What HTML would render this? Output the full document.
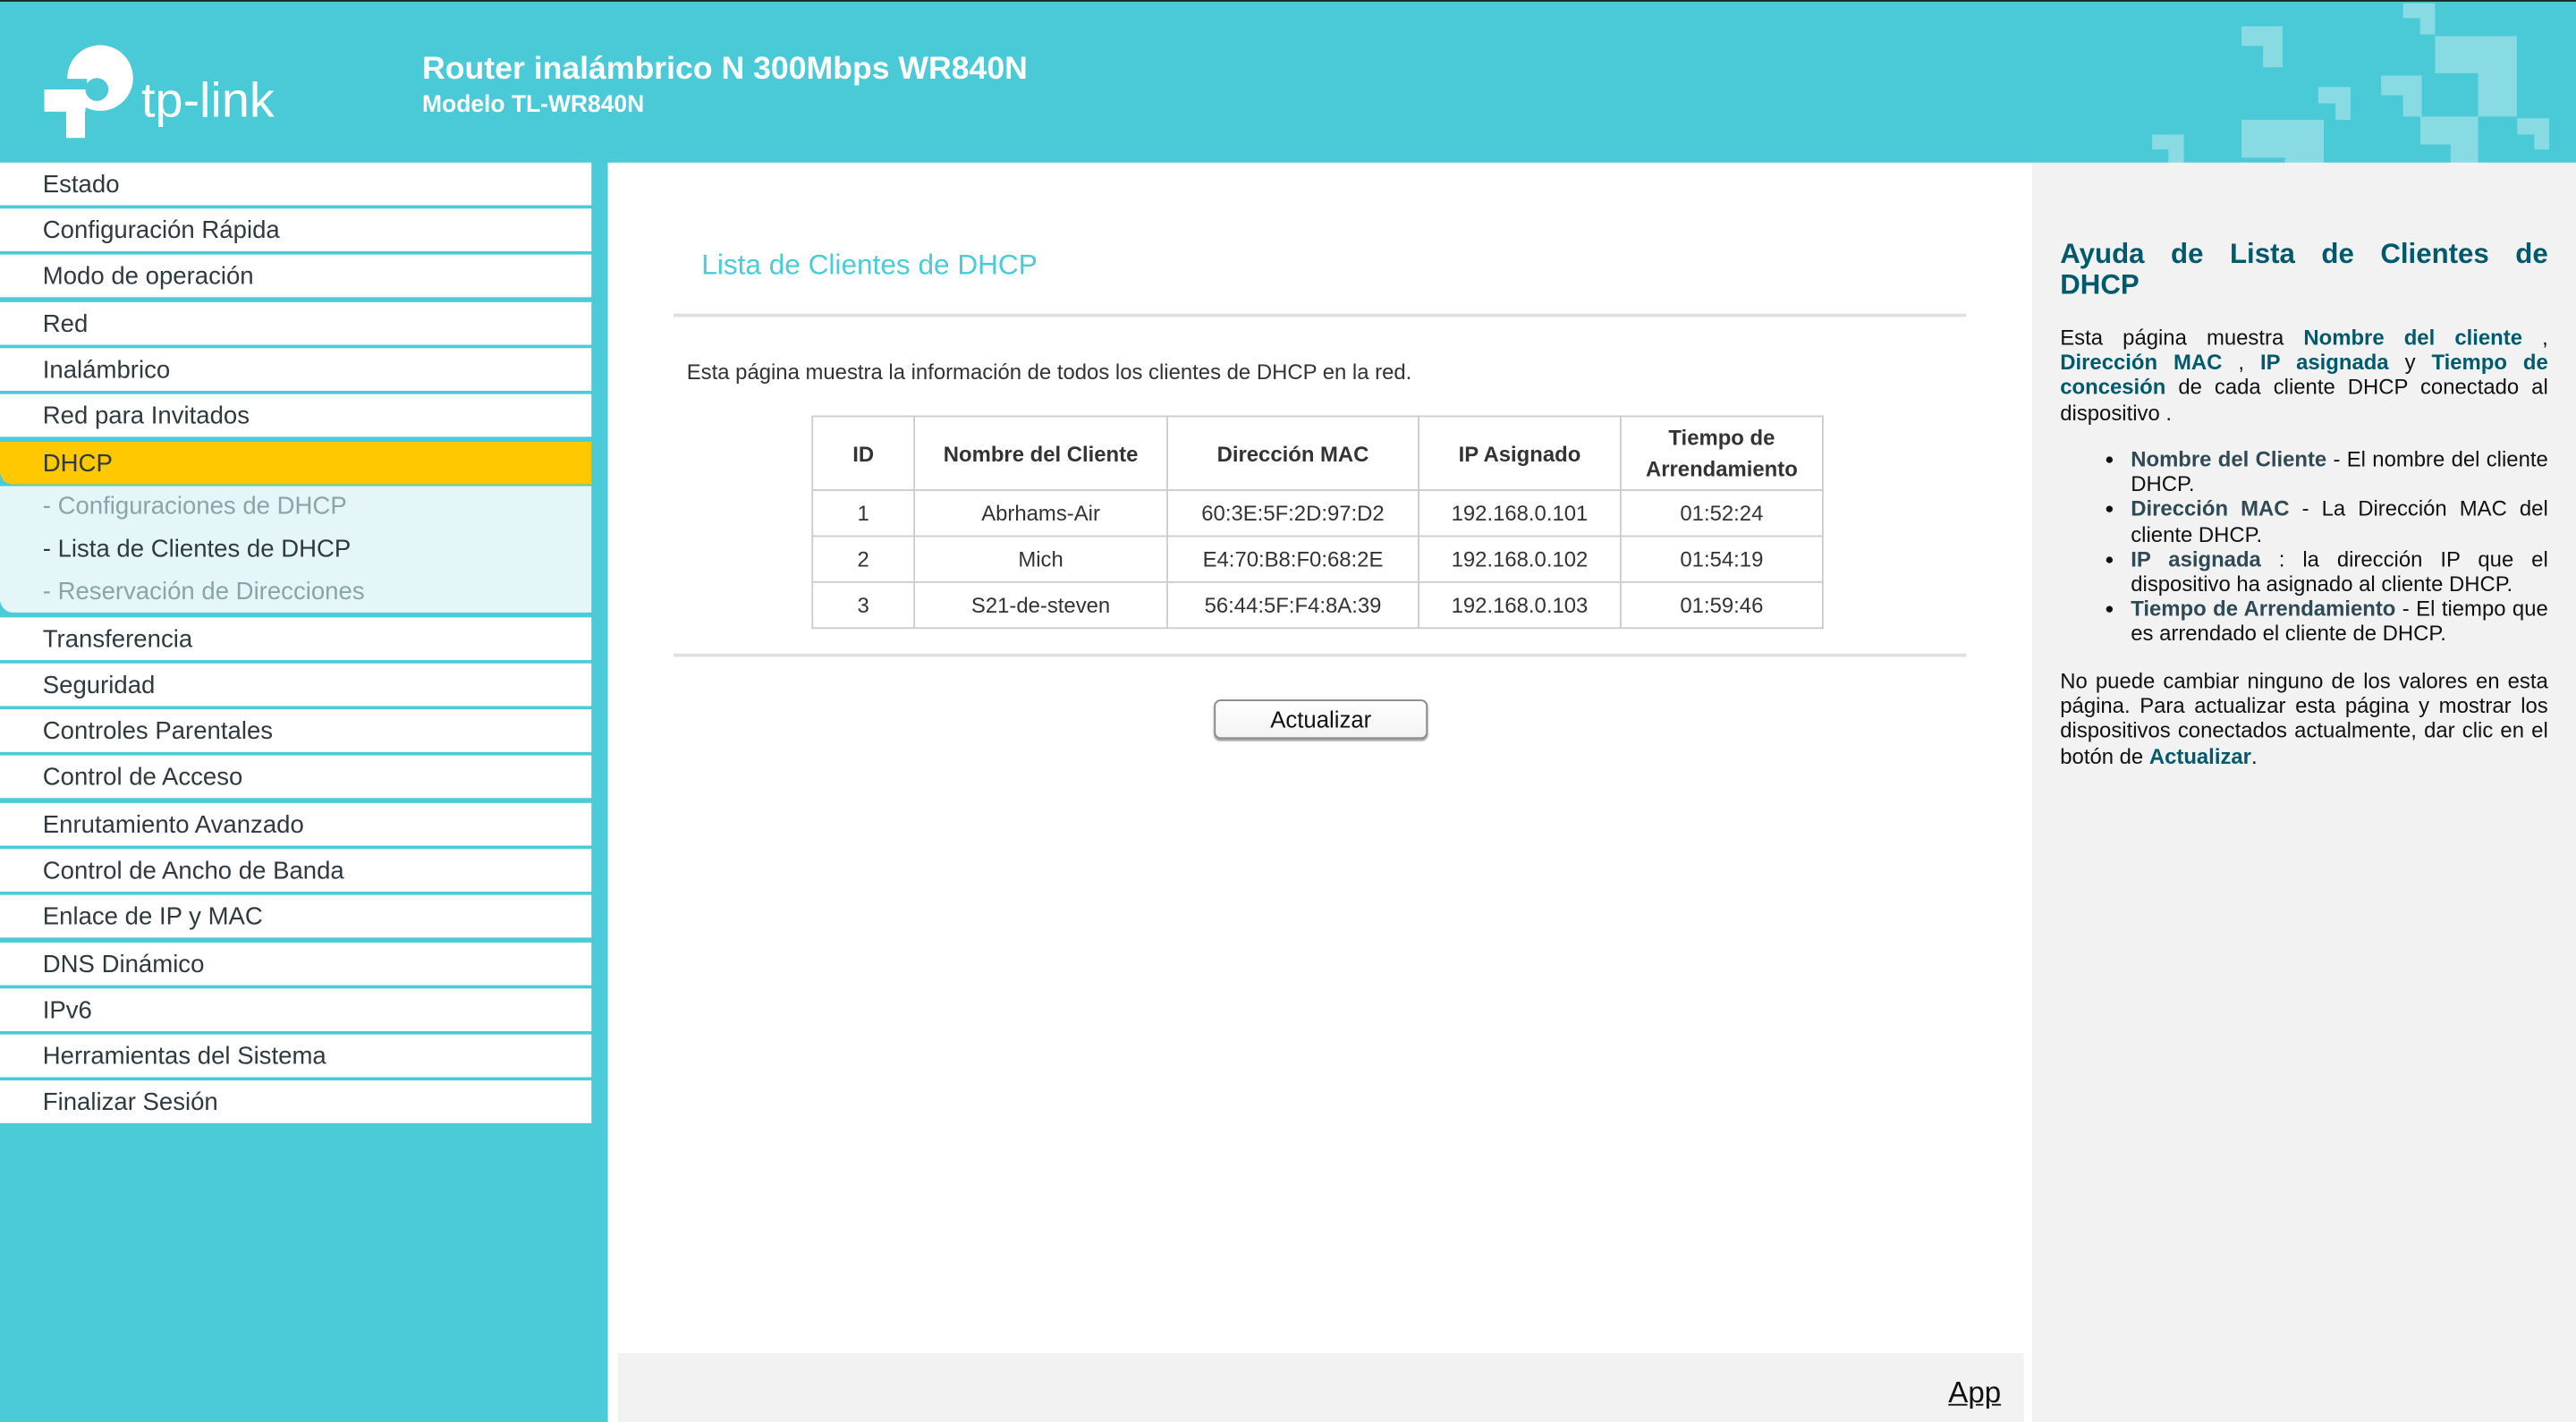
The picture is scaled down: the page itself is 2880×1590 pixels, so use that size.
<!DOCTYPE html>
<html><head><meta charset="utf-8"><style>
html,body{margin:0;padding:0;width:2880px;height:1590px;overflow:hidden;background:#fff}
#w{width:1568px;height:866px;transform:scale(1.83673,1.83603);transform-origin:0 0;position:relative;font-family:"Liberation Sans",Arial,sans-serif;background:#4acbd7}
#hdr{position:absolute;left:0;top:0;width:1568px;height:99px;background:#4acad7;border-top:1px solid #222;box-sizing:border-box}
.t1{position:absolute;left:257px;top:30px;color:#fff;font-weight:bold;font-size:19.4px}
.t2{position:absolute;left:257px;top:55px;color:#fff;font-weight:bold;font-size:14.4px}
#side{position:absolute;left:0;top:99px;width:370px;height:767px;background:#4acbd7}
.mi{position:absolute;left:0;width:360px;height:26px;background:#fff;color:#2f3a40;font-size:15px;line-height:27px;box-sizing:border-box;padding-left:26px}
.sel{background:#ffc800;border-radius:0 0 0 8px}
.sub{position:absolute;left:0;top:296px;width:360px;height:77px;background:#e5f6f9;border-radius:0 0 0 8px}
.sub div{height:26px;line-height:26px;padding-left:26px;font-size:15px;color:#8aa4aa}
#main{position:absolute;left:370px;top:99px;width:867px;height:767px;background:#fff}
#help{position:absolute;left:1237px;top:99px;width:331px;height:767px;background:#f2f2f2}
.ttl{position:absolute;left:57px;top:52px;color:#4acbd6;font-size:17.2px}
.hr{position:absolute;left:40px;width:787px;height:2px;background:#e0e0e0}
.desc{position:absolute;left:48px;top:120px;font-size:13px;color:#333}
table{position:absolute;left:124px;top:154px;border-collapse:collapse;font-size:13px;color:#333}
td,th{border:1px solid #ccc;text-align:center;padding:0;height:27px}
td{line-height:27px}
th{height:44px;font-weight:bold;line-height:19px}
.btn{position:absolute;left:369px;top:327px;width:128px;height:22px;border:1px solid #888;border-radius:4px;background:linear-gradient(#fff,#f3f3f3);font-size:14px;text-align:center;line-height:22px;color:#111;box-shadow:0 1px 1px #999}
#foot{position:absolute;left:6px;top:725px;width:856px;height:42px;background:#f2f2f2}
#foot span{position:absolute;right:14px;top:14px;font-size:18px;text-decoration:underline;color:#111}
#help .h{position:absolute;left:17px;top:46px;width:297px;font-size:17px;font-weight:bold;color:#005a6b;text-align:justify;line-height:19px;word-spacing:2px}
#help .p{position:absolute;left:17px;width:297px;font-size:13px;line-height:15.2px;color:#111;text-align:justify}
.b{font-weight:bold;color:#005a6b}
.b2{font-weight:bold;color:#2f4a55}
ul{margin:0;padding-left:43px}
</style></head><body><div id="w">
<div id="hdr">
<svg style="position:absolute;left:0;top:0" width="1568" height="99" viewBox="0 0 1568 99">
<path fill="#fff" fill-rule="evenodd" d="M61 26.5a20 20 0 1 1 0 40a20 20 0 1 1 0-40zM59 46.5a7 7 0 1 0 0 14a7 7 0 1 0 0-14z"/>
<rect x="39" y="47" width="14" height="6.5" fill="#4acad7"/>
<rect x="27" y="53.5" width="25" height="13.5" fill="#fff"/>
<rect x="40.3" y="53.5" width="11.4" height="29.5" fill="#fff"/>
<text x="86" y="70" fill="#fff" font-family="Liberation Sans,sans-serif" font-size="30" textLength="81" lengthAdjust="spacingAndGlyphs">tp-link</text>
<g fill="#88dbe2">
<path d="M1462.7 1H1482.2V20H1473.1V10H1462.7Z"/>
<path d="M1364.4 15H1389.4V40H1377.5V27H1364.4Z"/>
<path d="M1482.2 21H1532V70H1508.4V43.6H1482.2Z"/>
<path d="M1449.4 45H1474.1V70H1462.7V57H1449.4Z"/>
<path d="M1411.1 52H1430.8V72H1421.6V62H1411.1Z"/>
<path d="M1473.3 70H1508.4V99H1491.7V87H1473.3Z"/>
<path d="M1532.2 71H1551.7V90H1542.6V81H1532.2Z"/>
<path d="M1364.4 72H1414.5V99H1390.8V95H1364.4Z"/>
<path d="M1310 81H1329.3V99H1319.9V90H1310Z"/>
</g>
</svg>
<div class="t1">Router inalámbrico N 300Mbps WR840N</div>
<div class="t2">Modelo TL-WR840N</div>
</div>
<div id="side">
<div class="mi" style="top:0">Estado</div>
<div class="mi" style="top:28px">Configuración Rápida</div>
<div class="mi" style="top:56px">Modo de operación</div>
<div class="mi" style="top:85px">Red</div>
<div class="mi" style="top:113px">Inalámbrico</div>
<div class="mi" style="top:141px">Red para Invitados</div>
<div class="mi sel" style="top:170px">DHCP</div>
<div class="sub" style="top:197px"><div>- Configuraciones de DHCP</div><div style="color:#2f3a40">- Lista de Clientes de DHCP</div><div>- Reservación de Direcciones</div></div>
<div class="mi" style="top:277px">Transferencia</div>
<div class="mi" style="top:305px">Seguridad</div>
<div class="mi" style="top:333px">Controles Parentales</div>
<div class="mi" style="top:361px">Control de Acceso</div>
<div class="mi" style="top:390px">Enrutamiento Avanzado</div>
<div class="mi" style="top:418px">Control de Ancho de Banda</div>
<div class="mi" style="top:446px">Enlace de IP y MAC</div>
<div class="mi" style="top:475px">DNS Dinámico</div>
<div class="mi" style="top:503px">IPv6</div>
<div class="mi" style="top:531px">Herramientas del Sistema</div>
<div class="mi" style="top:559px">Finalizar Sesión</div>
</div>
<div id="main">
<div class="ttl">Lista de Clientes de DHCP</div>
<div class="hr" style="top:92px"></div>
<div class="desc">Esta página muestra la información de todos los clientes de DHCP en la red.</div>
<table>
<tr><th style="width:61px">ID</th><th style="width:153px">Nombre del Cliente</th><th style="width:152px">Dirección MAC</th><th style="width:122px">IP Asignado</th><th style="width:122px">Tiempo de<br>Arrendamiento</th></tr>
<tr><td>1</td><td>Abrhams-Air</td><td>60:3E:5F:2D:97:D2</td><td>192.168.0.101</td><td>01:52:24</td></tr>
<tr><td>2</td><td>Mich</td><td>E4:70:B8:F0:68:2E</td><td>192.168.0.102</td><td>01:54:19</td></tr>
<tr><td>3</td><td>S21-de-steven</td><td>56:44:5F:F4:8A:39</td><td>192.168.0.103</td><td>01:59:46</td></tr>
</table>
<div class="hr" style="top:299px"></div>
<div class="btn">Actualizar</div>
<div id="foot"><span>App</span></div>
</div>
<div id="help">
<div class="h">Ayuda de Lista de Clientes de DHCP</div>
<div class="p" style="top:99px">Esta página muestra <span class="b">Nombre del cliente</span> , <span class="b">Dirección MAC</span> , <span class="b">IP asignada</span> y <span class="b">Tiempo de concesión</span> de cada cliente DHCP conectado al dispositivo .</div>
<div class="p" style="top:173px"><ul>
<li><span class="b2">Nombre del Cliente</span> - El nombre del cliente DHCP.</li>
<li><span class="b2">Dirección MAC</span> - La Dirección MAC del cliente DHCP.</li>
<li><span class="b2">IP asignada</span> : la dirección IP que el dispositivo ha asignado al cliente DHCP.</li>
<li><span class="b2">Tiempo de Arrendamiento</span> - El tiempo que es arrendado el cliente de DHCP.</li>
</ul></div>
<div class="p" style="top:308px">No puede cambiar ninguno de los valores en esta página. Para actualizar esta página y mostrar los dispositivos conectados actualmente, dar clic en el botón de <span class="b">Actualizar</span>.</div>
</div>
</div></body></html>
